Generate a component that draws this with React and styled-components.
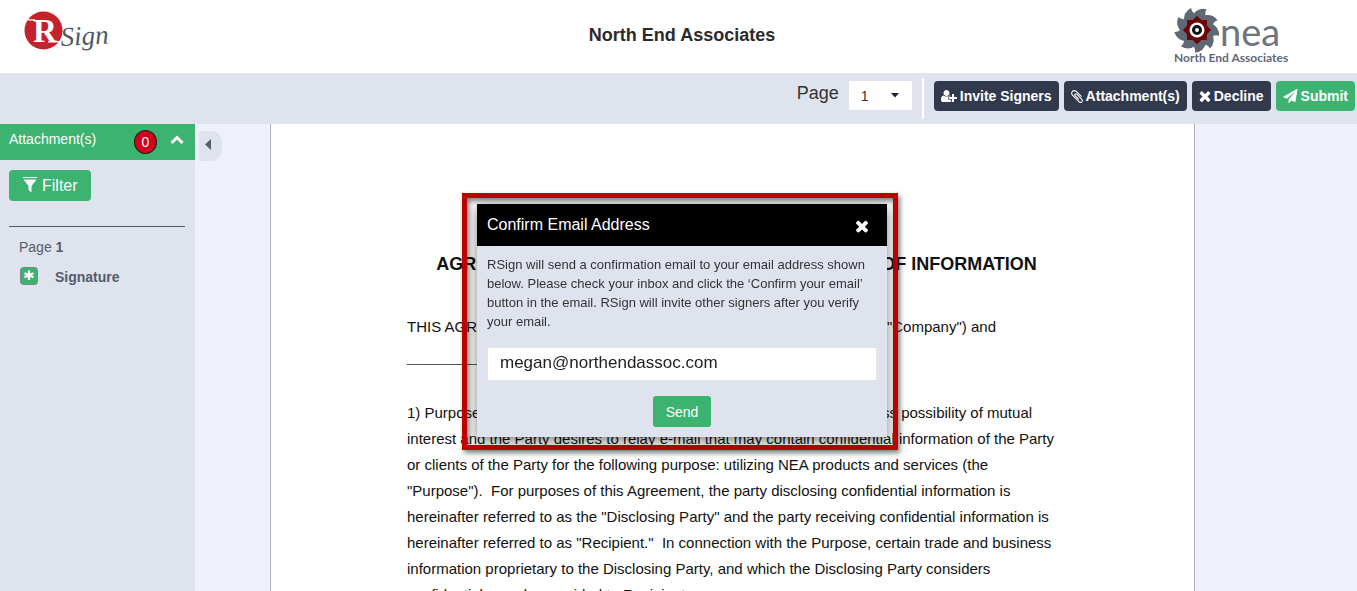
import React, { useState } from 'react';
import styled, { createGlobalStyle } from 'styled-components';

const GlobalStyle = createGlobalStyle`
  * {
    box-sizing: border-box;
  }

  body {
    margin: 0;
    color: #333333;
    font-family: "Liberation Sans", Arial, sans-serif;
    font-size: 14px;
  }

  button,
  input,
  select {
    font-family: inherit;
  }
`;

const Page = styled.div`
  display: flex;
  flex-direction: column;
  height: 100vh;
  overflow: hidden;
  background: #ffffff;
`;

const Header = styled.header`
  display: grid;
  grid-template-columns: 1fr auto 1fr;
  flex: none;
  padding: 8px 17px 7px 24px;
`;

const Title = styled.h1`
  margin: 0;
  padding-top: 16px;
  font-size: 18px;
  line-height: 22px;
  color: #2b2b2b;
`;

const ClientLogo = styled.div`
  display: flex;
  justify-content: flex-end;
  padding-right: 50px;
`;

const Toolbar = styled.div`
  display: flex;
  flex: none;
  align-items: flex-start;
  justify-content: flex-end;
  padding: 5px 2px 5px 0;
  background: #dfe3ee;
`;

const PageLabel = styled.label`
  margin-right: 10px;
  font-size: 18px;
  line-height: 30px;
`;

const SelectWrap = styled.div`
  display: flex;
  align-items: center;
  margin: 3px 10px 0 0;
  background: #ffffff;

  svg {
    margin-left: -22px;
    margin-right: 12px;
    pointer-events: none;
  }
`;

const PageSelect = styled.select`
  width: 63px;
  height: 29px;
  padding: 0 12px;
  border: 0;
  appearance: none;
  background: transparent;
  color: #333333;
  font-size: 14px;
`;

const Divider = styled.span`
  width: 2px;
  height: 41px;
  margin-right: 10px;
  background: #ffffff;
`;

const Actions = styled.div`
  display: flex;
  gap: 5px;
  padding-top: 3px;
`;

const ActionButton = styled.button`
  display: flex;
  align-items: center;
  gap: 3px;
  height: 30px;
  padding: 0 7px;
  border: 0;
  border-radius: 4px;
  background: ${(props) => (props.$primary ? '#3cb371' : '#32394d')};
  color: #ffffff;
  font-size: 14px;
  font-weight: bold;
  white-space: nowrap;
`;

const Body = styled.div`
  display: flex;
  flex: 1;
  min-height: 0;
  background: #eef1fa;
`;

const Sidebar = styled.aside`
  flex: none;
  width: 195px;
  background: #dfe3ee;
  color: #555b6b;
`;

const SidebarHeader = styled.button`
  display: flex;
  align-items: center;
  width: 100%;
  height: 36px;
  padding: 0 11px 0 9px;
  border: 0;
  background: #3cb371;
  color: #ffffff;
  font-size: 14px;
  text-align: left;

  svg {
    margin-bottom: 4px;
  }
`;

const SidebarTitle = styled.span`
  flex: 1;
  padding-bottom: 6px;
`;

const Count = styled.span`
  width: 23px;
  height: 24px;
  margin-right: 13px;
  border: 1px solid #1c1c1c;
  border-radius: 50%;
  background: #d0021b;
  line-height: 22px;
  text-align: center;
`;

const SidebarContent = styled.div`
  padding: 10px 10px 10px 9px;
`;

const FilterButton = styled.button`
  display: flex;
  align-items: center;
  gap: 5px;
  height: 31px;
  padding: 0 13px;
  border: 0;
  border-radius: 4px;
  background: #3cb371;
  color: #ffffff;
  font-size: 16px;

  svg {
    margin-bottom: 3px;
  }
`;

const FieldGroup = styled.section`
  margin-top: 25px;
  padding: 10px;
  border-top: 1px solid #555b6b;
`;

const GroupTitle = styled.h2`
  margin: 0 0 10px;
  font-size: 14px;
  font-weight: normal;
  line-height: 20px;

  b {
    font-weight: bold;
  }
`;

const Field = styled.a`
  display: flex;
  align-items: center;
  gap: 16px;
  color: inherit;
  font-weight: bold;
  text-decoration: none;
`;

const Viewer = styled.main`
  display: flex;
  flex: 1;
  min-width: 0;
  padding: 0 162px 0 4px;
`;

const CollapseButton = styled.button`
  flex: none;
  width: 23px;
  height: 30px;
  margin: 7px 48px 0 0;
  padding: 0 0 2px 5px;
  border: 0;
  border-radius: 0 11px 11px 0;
  background: #dfe3ee;
  text-align: left;
`;

const Sheet = styled.article`
  flex: 1;
  min-width: 0;
  overflow: hidden;
  padding: 127px 128px 0 136px;
  border: 1px solid #b0b2b8;
  border-width: 0 1px;
  background: #ffffff;
  color: #111111;
  font-size: 15px;
  line-height: 26px;
  white-space: pre;
`;

const SheetTitle = styled.h2`
  margin: 0 0 37px;
  font-size: 18px;
  line-height: 26px;
  text-align: center;
`;

const Paragraph = styled.p`
  margin: 0;
`;

const BlankLine = styled.p`
  margin: 4px 0 30px;
  color: #555555;
`;

const Overlay = styled.div`
  position: fixed;
  inset: 0;
  display: flex;
  align-items: flex-start;
  justify-content: center;
  padding: 193px 0 0 3px;
`;

const Highlight = styled.div`
  width: 436px;
  padding: 6px 6px 8px 10px;
  border: 5px solid #c00000;
  box-shadow: 2px 3px 5px rgba(0, 0, 0, 0.5), inset 2px 3px 5px rgba(0, 0, 0, 0.5);
`;

const Dialog = styled.section`
  background: #dfe3ee;
  box-shadow: 0 4px 12px rgba(0, 0, 0, 0.5);
`;

const DialogHeader = styled.div`
  display: flex;
  justify-content: space-between;
  align-items: center;
  height: 42px;
  padding: 0 18px 0 10px;
  background: #000000;
  color: #ffffff;
`;

const DialogTitle = styled.h2`
  margin: 0;
  font-size: 16px;
  font-weight: normal;
`;

const CloseButton = styled.button`
  display: flex;
  padding: 2px 0 0;
  border: 0;
  background: transparent;
  color: #ffffff;
`;

const DialogForm = styled.form`
  display: flex;
  flex-direction: column;
  align-items: center;
  padding: 9px 10px 10px;
`;

const Message = styled.label`
  width: 100%;
  margin-bottom: 16px;
  font-size: 13px;
  line-height: 19px;
`;

const EmailInput = styled.input`
  width: 100%;
  height: 34px;
  margin-bottom: 15px;
  padding: 0 12px 3px;
  border: 1px solid #e4e4e4;
  color: #222222;
  font-size: 17px;
`;

const SendButton = styled.button`
  height: 31px;
  padding: 0 13px;
  border: 0;
  border-radius: 3px;
  background: #3cb371;
  color: #ffffff;
  font-size: 14px;
`;

const ICONS = {
  userPlus:
    'M704 896q-159 0-271.5-112.5t-112.5-271.5 112.5-271.5 271.5-112.5 271.5 112.5 112.5 271.5-112.5 271.5-271.5 112.5zm960 128h352q13 0 22.5 9.5t9.5 22.5v192q0 13-9.5 22.5t-22.5 9.5h-352v352q0 13-9.5 22.5t-22.5 9.5h-192q-13 0-22.5-9.5t-9.5-22.5v-352h-352q-13 0-22.5-9.5t-9.5-22.5v-192q0-13 9.5-22.5t22.5-9.5h352v-352q0-13 9.5-22.5t22.5-9.5h192q13 0 22.5 9.5t9.5 22.5v352zm-736 224q0 52 38 90t90 38h256v238q-68 50-171 50h-874q-121 0-194-69t-73-190q0-53 3.5-103.5t14-109 26.5-108.5 43-97.5 62-81 85.5-53.5 111.5-20q19 0 39 17 79 61 154.5 91.5t164.5 30.5 164.5-30.5 154.5-91.5q20-17 39-17 132 0 217 96h-223q-52 0-90 38t-38 90v192z',
  paperclip:
    'M1596 1385q0 117-79 196t-196 79q-135 0-235-100l-777-776q-113-115-113-271 0-159 110-270t269-111q158 0 273 113l605 606q10 10 10 22 0 16-30.5 46.5t-46.5 30.5q-13 0-23-10l-606-607q-79-77-181-77-106 0-179 75t-73 181q0 105 76 181l776 777q63 63 145 63 64 0 106-42t42-106q0-82-63-145l-581-581q-26-24-60-24-29 0-48 19t-19 48q0 32 25 59l410 410q10 10 10 22 0 16-31 47t-47 31q-12 0-22-10l-410-410q-63-61-63-149 0-82 57-139t139-57q88 0 149 63l581 581q100 98 100 235z',
  times:
    'M1490 1322q0 40-28 68l-136 136q-28 28-68 28t-68-28l-294-294-294 294q-28 28-68 28t-68-28l-136-136q-28-28-28-68t28-68l294-294-294-294q-28-28-28-68t28-68l136-136q28-28 68-28t68 28l294 294 294-294q28-28 68-28t68 28l136 136q28 28 28 68t-28 68l-294 294 294 294q28 28 28 68z',
  plane:
    'M1764 11q33 24 27 64l-256 1536q-5 29-32 45-14 8-31 8-11 0-24-5l-453-185-242 295q-18 23-49 23-13 0-22-4-19-7-30.5-23.5t-11.5-36.5v-349l864-1059-1069 925-395-162q-37-14-40-55-2-40 32-59l1664-960q15-9 32-9 20 0 36 11z',
};

const Icon = ({ name, width, height = 14, box = '0 0 1792 1792' }) => (
  <svg width={width} height={height} viewBox={box} fill="currentColor" aria-hidden="true">
    <path d={ICONS[name]} />
  </svg>
);

const RSignLogo = () => (
  <svg width="90" height="58" viewBox="0 0 90 58" role="img" aria-label="RSign">
    <circle cx="19.500" cy="22.500" r="19" fill="#c4232b" />
    <path d="M3 11.800h8M24 33.800h14" stroke="#ffffff" strokeWidth="1.200" />
    <text x="9" y="34" fill="#ffffff" fontFamily="Liberation Serif, serif" fontWeight="bold" fontSize="33">R</text>
    <text x="37" y="38" fill="#4d5868" fontFamily="Liberation Serif, serif" fontStyle="italic" fontSize="27" transform="rotate(-3 37 38)">Sign</text>
  </svg>
);

const NeaLogo = () => (
  <svg width="117" height="58" viewBox="0 0 117 58" role="img" aria-label="nea North End Associates">
    <g fill="#5f6875">
      {[0, 40, 80, 120, 160, 200, 240, 280, 320].map((angle) => (
        <path key={angle} d="M11 14Q10 4 18 0Q19 7 29 8L24 22Z" transform={`rotate(${angle} 24 22)`} />
      ))}
    </g>
    <g fill="#6e0206">
      <rect x="14" y="12" width="20" height="20" />
      <rect x="14" y="12" width="20" height="20" transform="rotate(45 24 22)" />
    </g>
    <circle cx="24" cy="22" r="7.500" fill="#ffffff" />
    <circle cx="24" cy="22" r="3.500" fill="#ffffff" stroke="#111111" strokeWidth="3" />
    <text x="47" y="38" fill="#6c7480" fontFamily="Lato, sans-serif" fontSize="38">nea</text>
    <text x="1" y="54" fill="#5f6875" fontFamily="Lato, sans-serif" fontWeight="bold" fontSize="12">North End Associates</text>
  </svg>
);

const App = () => {
  const [email, setEmail] = useState('megan@northendassoc.com');

  return (
    <Page>
      <GlobalStyle />
      <Header>
        <RSignLogo />
        <Title>North End Associates</Title>
        <ClientLogo>
          <NeaLogo />
        </ClientLogo>
      </Header>

      <Toolbar>
        <PageLabel htmlFor="page">Page</PageLabel>
        <SelectWrap>
          <PageSelect id="page">
            <option>1</option>
          </PageSelect>
          <svg width="10" height="5" viewBox="0 0 10 5" aria-hidden="true">
            <path d="M1 0h8L5 4.500z" fill="#222222" />
          </svg>
        </SelectWrap>
        <Divider />
        <Actions>
          <ActionButton type="button">
            <Icon name="userPlus" width={16} box="0 0 2048 1792" />
            Invite Signers
          </ActionButton>
          <ActionButton type="button">
            <Icon name="paperclip" width={12} height={15} box="192 0 1408 1792" />
            Attachment(s)
          </ActionButton>
          <ActionButton type="button">
            <Icon name="times" width={12} height={16} box="256 0 1280 1792" />
            Decline
          </ActionButton>
          <ActionButton type="button" $primary>
            <Icon name="plane" width={15} />
            Submit
          </ActionButton>
        </Actions>
      </Toolbar>

      <Body>
        <Sidebar>
          <SidebarHeader type="button">
            <SidebarTitle>Attachment(s)</SidebarTitle>
            <Count>0</Count>
            <svg width="14" height="10" viewBox="0 0 14 10" aria-hidden="true">
              <path d="M1.500 8L7 2.500l5.500 5.500" fill="none" stroke="#ffffff" strokeWidth="3" />
            </svg>
          </SidebarHeader>
          <SidebarContent>
            <FilterButton type="button">
              <svg width="15" height="17" viewBox="0 0 15 17" fill="#ffffff" aria-hidden="true">
                <path d="M1 1h14v1H1zM1.500 3.500h13L9.500 10v6.500L6.500 14v-4z" />
              </svg>
              Filter
            </FilterButton>
            <FieldGroup>
              <GroupTitle>
                Page <b>1</b>
              </GroupTitle>
              <Field href="#signature">
                <svg width="20" height="19" viewBox="0 0 20 19" aria-hidden="true">
                  <rect x="1.500" y="0.500" width="17" height="17" rx="3" fill="#3cb371" stroke="#7b8590" />
                  <path d="M10 3.500v9.500M5.500 6.300l9 4M14.500 6.300l-9 4" stroke="#ffffff" strokeWidth="2.200" />
                </svg>
                Signature
              </Field>
            </FieldGroup>
          </SidebarContent>
        </Sidebar>

        <Viewer>
          <CollapseButton type="button" aria-label="Collapse panel">
            <svg width="8" height="11" viewBox="0 0 8 11" aria-hidden="true">
              <path d="M7 0v11L1 5.500z" fill="#555b6b" />
            </svg>
          </CollapseButton>
          <Sheet>
            <SheetTitle>AGREEMENT REGARDING THE NON-DISCLOSURE OF INFORMATION</SheetTitle>
            <Paragraph>
              THIS AGREEMENT is made by and between North End Associates Inc ("Company") and
            </Paragraph>
            <BlankLine>__________________________</BlankLine>
            <Paragraph>
              1) Purpose.  The Company and the Party each wish to explore a business possibility of mutual
              <br />
              interest and the Party desires to relay e-mail that may contain confidential information of the Party
              <br />
              or clients of the Party for the following purpose: utilizing NEA products and services (the
              <br />
              "Purpose").  For purposes of this Agreement, the party disclosing confidential information is
              <br />
              hereinafter referred to as the "Disclosing Party" and the party receiving confidential information is
              <br />
              hereinafter referred to as "Recipient."  In connection with the Purpose, certain trade and business
              <br />
              information proprietary to the Disclosing Party, and which the Disclosing Party considers
              <br />
              confidential, may be provided to Recipient.
            </Paragraph>
          </Sheet>
        </Viewer>
      </Body>

      <Overlay>
        <Highlight>
          <Dialog role="dialog" aria-labelledby="dialog-title">
            <DialogHeader>
              <DialogTitle id="dialog-title">Confirm Email Address</DialogTitle>
              <CloseButton type="button" aria-label="Close">
                <Icon name="times" width={14} height={18} box="256 0 1280 1792" />
              </CloseButton>
            </DialogHeader>
            <DialogForm onSubmit={(e) => e.preventDefault()}>
              <Message htmlFor="email">
                RSign will send a confirmation email to your email address shown below. Please check your inbox and
                click the ‘Confirm your email’ button in the email. RSign will invite other signers after you verify
                your email.
              </Message>
              <EmailInput id="email" type="email" value={email} onChange={(e) => setEmail(e.target.value)} />
              <SendButton type="submit">Send</SendButton>
            </DialogForm>
          </Dialog>
        </Highlight>
      </Overlay>
    </Page>
  );
};

export default App;
